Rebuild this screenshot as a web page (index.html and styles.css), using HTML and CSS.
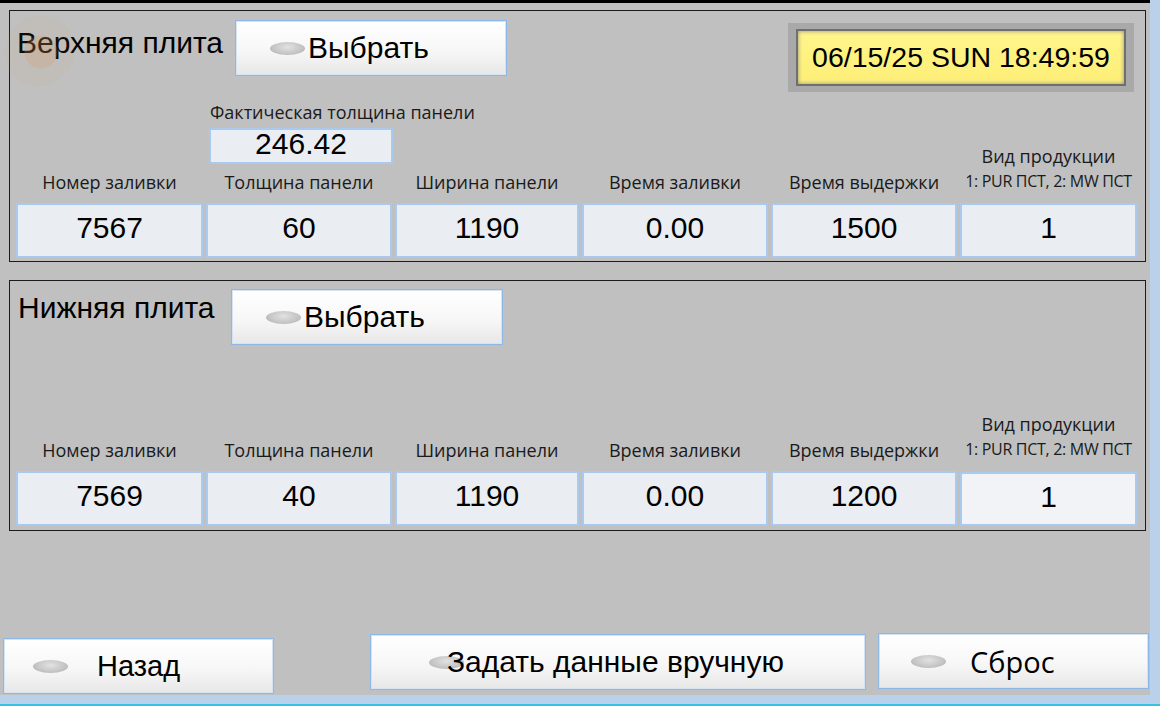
FILE: index.html
```html
<!DOCTYPE html>
<html lang="ru">

<head>
    <meta charset="UTF-8">
    <meta name="viewport" content="width=device-width, initial-scale=1.0">
    <title>Параметры заливки</title>
    <link rel="stylesheet" href="styles.css">
</head>

<body>

    <div class="screen">
        <div class="topbar"></div>
        <div class="touch-mark"></div>

        <!-- Upper plate -->
        <section class="plate">
            <div class="plate-head">
                <h2 class="plate-title">Верхняя плита</h2>
                <button class="btn btn-select"><span class="lamp"></span>Выбрать</button>
                <div class="clock">
                    <div class="clock-face">06/15/25 SUN 18:49:59</div>
                </div>
            </div>

            <div class="actual">
                <div class="actual-label">Фактическая толщина панели</div>
                <div class="cell cell-actual">246.42</div>
            </div>

            <div class="row labels">
                <div class="label">Номер заливки</div>
                <div class="label">Толщина панели</div>
                <div class="label">Ширина панели</div>
                <div class="label">Время заливки</div>
                <div class="label">Время выдержки</div>
                <div class="label label-kind">
                    <div>Вид продукции</div>
                    <div class="label-sub">1: PUR ПСТ, 2: MW ПСТ</div>
                </div>
            </div>

            <div class="row cells">
                <div class="cell">7567</div>
                <div class="cell">60</div>
                <div class="cell">1190</div>
                <div class="cell">0.00</div>
                <div class="cell">1500</div>
                <div class="cell">1</div>
            </div>
        </section>

        <!-- Lower plate -->
        <section class="plate plate-lower">
            <div class="plate-head">
                <h2 class="plate-title">Нижняя плита</h2>
                <button class="btn btn-select"><span class="lamp"></span>Выбрать</button>
            </div>

            <div class="row labels">
                <div class="label">Номер заливки</div>
                <div class="label">Толщина панели</div>
                <div class="label">Ширина панели</div>
                <div class="label">Время заливки</div>
                <div class="label">Время выдержки</div>
                <div class="label label-kind">
                    <div>Вид продукции</div>
                    <div class="label-sub">1: PUR ПСТ, 2: MW ПСТ</div>
                </div>
            </div>

            <div class="row cells">
                <div class="cell">7569</div>
                <div class="cell">40</div>
                <div class="cell">1190</div>
                <div class="cell">0.00</div>
                <div class="cell">1200</div>
                <div class="cell cell-light">1</div>
            </div>
        </section>

        <div class="footer">
            <button class="btn btn-back"><span class="lamp"></span>Назад</button>
            <button class="btn btn-manual"><span class="lamp"></span>Задать данные вручную</button>
            <button class="btn btn-reset"><span class="lamp"></span>Сброс</button>
        </div>
    </div>

    <div class="taskbar"></div>

</body>

</html>
```

FILE: styles.css
```css
body {
    margin: 0;
    width: 1160px;
    height: 706px;
    overflow: hidden;
    background-color: #b9d1ea;
    font-family: "Liberation Sans", Arial, sans-serif;
    color: #000;
}

.screen {
    position: relative;
    width: 1150px;
    height: 695px;
    background-color: #c0c0c0;
    display: flex;
    flex-direction: column;
}

.topbar {
    height: 3px;
    background-color: #000;
}

.taskbar {
    height: 9px;
    background-color: #b9d1ea;
    border-bottom: 2px solid #37c3df;
}

/* faint touch feedback left over on the panel */
.touch-mark {
    position: absolute;
    left: 1px;
    top: 12px;
    width: 74px;
    height: 74px;
    border-radius: 50%;
    background: radial-gradient(circle at 54% 54%, rgba(214, 150, 92, 0.28) 0 16px, rgba(214, 150, 92, 0.07) 17px 36px, transparent 37px);
    pointer-events: none;
}

.plate {
    box-sizing: border-box;
    width: 1137px;
    margin: 7px 0 0 9px;
    padding: 0 0 3px 6px;
    border: 1px solid #1c1c1c;
}

.plate-lower {
    margin-top: 18px;
    padding-bottom: 4px;
}

.plate-head {
    display: flex;
    align-items: flex-start;
    height: 84px;
}

.plate-title {
    margin: 15px 0 0 1px;
    width: 218px;
    font-size: 30px;
    font-weight: normal;
    line-height: 34px;
}

.plate-lower .plate-title {
    margin: 10px 0 0 2px;
    width: 213px;
}

.plate-lower .plate-head {
    height: 151px;
}

.btn {
    box-sizing: border-box;
    display: flex;
    align-items: center;
    height: 56px;
    padding: 0;
    border: 1px solid #8db7e6;
    box-shadow: inset 0 0 0 1px #d4e4f6;
    background: linear-gradient(#ffffff, #f7f7f7 55%, #e7e7e7);
    font-family: "Liberation Sans", Arial, sans-serif;
    font-size: 30px;
    color: #000;
}

.lamp {
    flex: none;
    width: 35px;
    height: 13px;
    border-radius: 50%;
    background: radial-gradient(ellipse at 50% 40%, #e2e2e2, #c4c4c4 60%, #a9a9a9);
}

.btn-select {
    width: 272px;
    margin-top: 9px;
    padding-left: 34px;
}

.btn-select .lamp {
    margin-right: 3px;
}

.plate-lower .btn-select {
    margin-top: 8px;
}

.clock {
    margin: 12px 11px 0 auto;
    padding: 6px 8px;
    width: 346px;
    height: 69px;
    box-sizing: border-box;
    background-color: #a9a9a9;
}

.clock-face {
    box-sizing: border-box;
    height: 100%;
    display: flex;
    align-items: center;
    justify-content: center;
    background: linear-gradient(#fff58a, #fdee76);
    border: 2px solid #6f6f6f;
    box-shadow: inset 0 0 4px #8a8a8a;
    font-size: 28.5px;
}

.actual {
    margin: 7px 0 0 193px;
    width: 184px;
}

.actual-label {
    width: 300px;
    margin-left: 1px;
    font-family: "Open Sans", sans-serif;
    font-size: 18px;
    line-height: 20px;
    color: #1a1a1a;
    white-space: nowrap;
}

.cell-actual {
    margin-top: 6px;
    height: 36px;
    padding-bottom: 2px;
}

.row {
    display: grid;
    grid-template-columns: 187px 186px 184px 186px 186px 177px;
    column-gap: 3px;
}

.labels {
    height: 39px;
    grid-template-rows: 39px;
}

.label {
    display: flex;
    flex-direction: column;
    justify-content: flex-end;
    align-items: center;
    padding-bottom: 11px;
    font-family: "Open Sans", sans-serif;
    font-size: 18px;
    line-height: 20px;
    color: #1a1a1a;
    white-space: nowrap;
}

.label-kind {
    padding-bottom: 12px;
}

.label-sub {
    margin-top: 5px;
    font-size: 16px;
    letter-spacing: -0.3px;
    line-height: 20px;
}

.cells {
    height: 55px;
}

.cell {
    box-sizing: border-box;
    display: flex;
    align-items: center;
    justify-content: center;
    padding-bottom: 5px;
    background-color: #eaedf2;
    border: 2px solid #a9c9ee;
    border-radius: 2px;
    font-size: 30px;
}

.cell-light {
    background-color: #f1f3f7;
    margin-top: 1px;
}

.footer {
    margin-top: auto;
    display: flex;
    align-items: flex-end;
}

.btn-back {
    width: 271px;
    margin: 0 0 1px 3px;
    padding-left: 29px;
    font-size: 29px;
}

.btn-back .lamp {
    margin-right: 29px;
}

.btn-manual {
    width: 496px;
    margin: 0 0 5px 96px;
    padding-left: 58px;
}

.btn-manual .lamp {
    margin-right: -17px;
}

.btn-reset {
    width: 271px;
    margin: 0 0 6px 12px;
    padding-left: 32px;
    font-family: "Open Sans", sans-serif;
    font-size: 29px;
}

.btn-reset .lamp {
    margin-right: 24px;
}
```
